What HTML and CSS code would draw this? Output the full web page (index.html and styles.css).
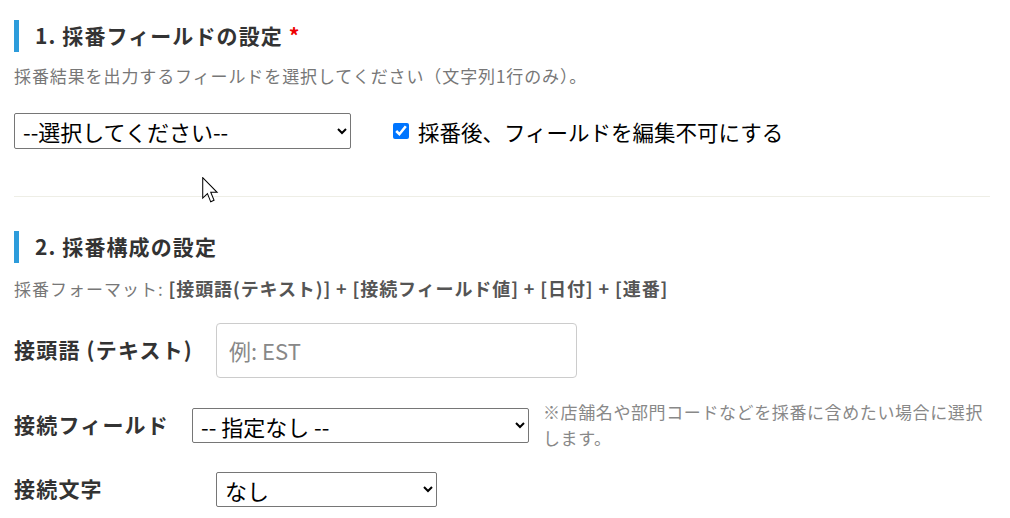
FILE: index.html
```html
<!DOCTYPE html>
<html lang="ja">
<head>
<meta charset="utf-8">
<title>採番設定</title>
<link rel="stylesheet" href="styles.css">
</head>
<body>
<div class="page">
  <section class="section">
    <h2 class="section-title">1. 採番フィールドの設定 <span class="required">*</span></h2>
    <p class="desc">採番結果を出力するフィールドを選択してください（文字列1行のみ）。</p>
    <div class="field-line">
      <select class="select select-field">
        <option>--選択してください--</option>
      </select>
      <label class="check">
        <input type="checkbox" checked>
        <span>採番後、フィールドを編集不可にする</span>
      </label>
    </div>
  </section>

  <hr class="divider">

  <section class="section">
    <h2 class="section-title">2. 採番構成の設定</h2>
    <p class="format">採番フォーマット: <strong>[接頭語(テキスト)] + [接続フィールド値] + [日付] + [連番]</strong></p>
    <div class="rows">
      <div class="row">
        <label class="row-label">接頭語 (テキスト)</label>
        <input class="text-input indent" type="text" placeholder="例: EST">
      </div>
      <div class="row">
        <label class="row-label">接続フィールド</label>
        <select class="select select-join">
          <option>-- 指定なし --</option>
        </select>
        <p class="note">※店舗名や部門コードなどを採番に含めたい場合に選択<br>します。</p>
      </div>
      <div class="row">
        <label class="row-label">接続文字</label>
        <select class="select select-sep indent">
          <option>なし</option>
        </select>
      </div>
    </div>
  </section>

  <svg class="cursor" width="18" height="28" viewBox="0 0 14 22" aria-hidden="true">
    <path d="M0.5 0.5 L0.5 16.5 L4.2 13 L6.8 19.5 L9.4 18.3 L6.8 12 L11.8 12 Z" fill="#fff" stroke="#000" stroke-width="0.8" stroke-linejoin="miter"/>
  </svg>
</div>
</body>
</html>
```

FILE: styles.css
```css
html, body {
  margin: 0;
  padding: 0;
  background: #fff;
}

body {
  font-family: "Noto Sans CJK JP", "Noto Sans", sans-serif;
  color: #333;
}

.page {
  position: relative;
  padding: 20px 20px 0 14px;
}

.section-title {
  margin: 0;
  height: 32px;
  line-height: 30px;
  padding-bottom: 2px;
  box-sizing: border-box;
  border-left: 5px solid #2d9cdb;
  padding-left: 16px;
  font-size: 21px;
  font-weight: 700;
  color: #333;
  letter-spacing: 1.1px;
}

.required {
  color: #e00;
}

.desc {
  margin: 12px 0 0;
  font-size: 17px;
  line-height: 24px;
  color: #777;
  letter-spacing: 0.9px;
}

.field-line {
  margin-top: 25px;
  display: flex;
  align-items: center;
}

.select {
  font-family: "Noto Sans CJK JP", "Noto Sans", sans-serif;
  background: #fff;
  color: #000;
  border: 1px solid #767676;
  border-radius: 2px;
  padding: 0 4px 2px;
  box-sizing: border-box;
}

.select-field {
  width: 337px;
  height: 36px;
  font-size: 22px;
}

.check {
  margin-left: 42px;
  display: flex;
  align-items: center;
  gap: 9px;
  font-size: 21.5px;
  color: #000;
}

.check input {
  margin: 0;
  width: 16px;
  height: 16px;
}

.divider {
  margin: 47px 0 0 0;
  border: 0;
  border-top: 1px solid #eeeee6;
  height: 0;
}

.section + .divider + .section .section-title {
  margin-top: 34px;
}

.format {
  margin: 13px 0 0;
  font-size: 17px;
  line-height: 24px;
  color: #777;
  letter-spacing: 1px;
}

.format strong {
  color: #555;
  font-weight: 700;
  font-size: 18px;
  letter-spacing: 0.9px;
}

.rows {
  margin-top: 22px;
  display: flex;
  flex-direction: column;
  gap: 21px;
}

.row {
  display: flex;
  align-items: center;
}

.row-label {
  width: 178px;
  flex-shrink: 0;
  font-size: 21px;
  font-weight: 700;
  color: #333;
  letter-spacing: 1.2px;
  white-space: nowrap;
  padding-bottom: 3px;
}

.indent {
  margin-left: 24px;
}

.text-input {
  width: 361px;
  height: 55px;
  box-sizing: border-box;
  border: 1px solid #ccc;
  border-radius: 4px;
  padding: 0 12px 2px;
  font-family: "Noto Sans CJK JP", "Noto Sans", sans-serif;
  font-size: 22px;
  color: #333;
}

.text-input::placeholder {
  color: #888;
}

.select-join {
  width: 337px;
  height: 35px;
  font-size: 22px;
}

.select-sep {
  width: 221px;
  height: 35px;
  font-size: 22px;
}

.note {
  margin: 0 0 0 14px;
  font-size: 17px;
  line-height: 26px;
  color: #888;
  letter-spacing: 0.6px;
}

.cursor {
  position: absolute;
  left: 202px;
  top: 177px;
}
```
